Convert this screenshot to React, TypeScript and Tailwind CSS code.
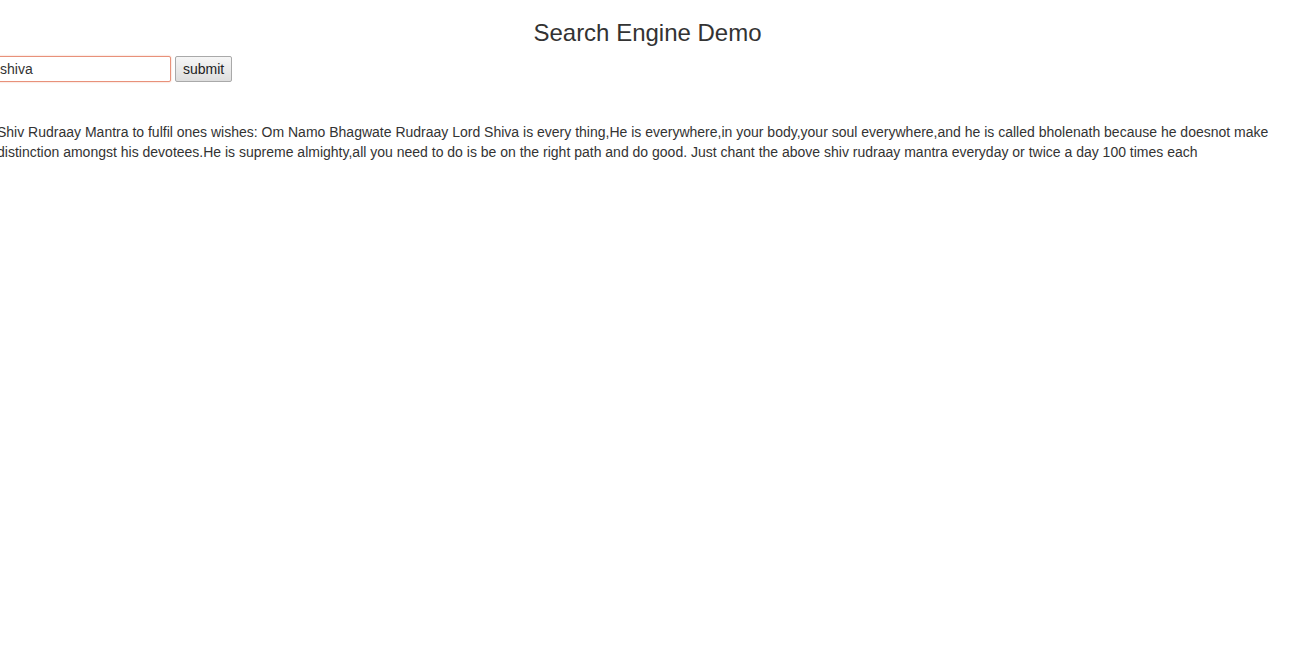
const App = () => {
  return (
    <div className="min-h-screen bg-white font-['Liberation_Sans',Arial,sans-serif] text-[14px] leading-[20px] text-[#333]">
      <h3 className="mt-5 mb-2.5 pr-[2px] text-center text-[24px] leading-[1.1] font-normal">
        Search Engine Demo
      </h3>
      <form className="flex items-center gap-1 -ml-[4px]" onSubmit={(e) => e.preventDefault()}>
        <input
          type="text"
          defaultValue="shiva"
          className="h-[26px] w-[175px] border border-[#e8917a] rounded-[2px] bg-white px-[3px] text-[14px] text-[#333] shadow-[0_0_2px_#f3b9a6] outline-none"
        />
        <button
          type="submit"
          className="h-[26px] px-[7px] border border-[#a9a9a9] rounded-[2px] bg-gradient-to-b from-[#f6f6f6] to-[#dedede] text-[14px] text-[#222]"
        >
          submit
        </button>
      </form>
      <div className="mt-10 -ml-[3px] pr-[15px]">
        <p>
          Shiv Rudraay Mantra to fulfil ones wishes: Om Namo Bhagwate Rudraay Lord Shiva is every thing,He is
          everywhere,in your body,your soul everywhere,and he is called bholenath because he doesnot make
          distinction amongst his devotees.He is supreme almighty,all you need to do is be on the right path and do
          good. Just chant the above shiv rudraay mantra everyday or twice a day 100 times each
        </p>
      </div>
    </div>
  );
};

export default App;
